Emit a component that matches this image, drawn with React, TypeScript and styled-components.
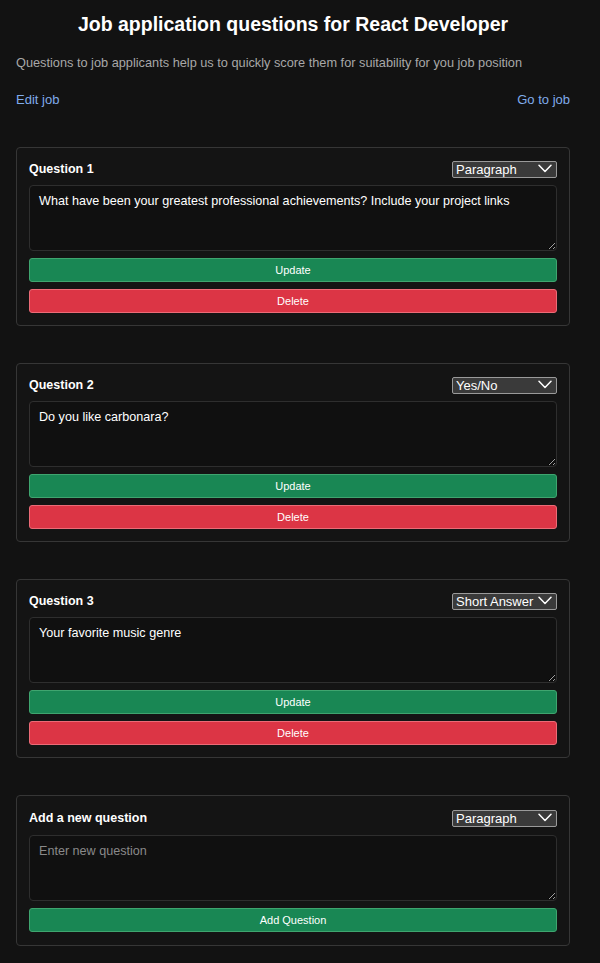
import React from "react";
import styled, { createGlobalStyle } from "styled-components";

const Global = createGlobalStyle`
  html, body { margin: 0; padding: 0; background: #121212; }
  body { font-family: "Liberation Sans", Arial, sans-serif; color: #fff; }
  * { box-sizing: border-box; }
`;

const Page = styled.div`
  padding: 0 30px 20px 16px;
  display: flex;
  flex-direction: column;
`;

const Title = styled.h1`
  margin: 12px 0 0 0;
  font-size: 19.5px;
  font-weight: 700;
  text-align: center;
  line-height: 24px;
`;

const Subtitle = styled.p`
  margin: 19px 0 0 0;
  font-size: 12.75px;
  line-height: 16px;
  color: #a8a8a8;
`;

const LinkRow = styled.div`
  display: flex;
  justify-content: space-between;
  margin-top: 21px;
  margin-bottom: 39px;
`;

const Link = styled.a`
  color: #80aceb;
  font-size: 13px;
  line-height: 16px;
  text-decoration: none;
`;

const List = styled.div`
  display: flex;
  flex-direction: column;
  gap: 37px;
`;

const Card = styled.div<{ $loose?: boolean }>`
  border: 1px solid #363636;
  border-radius: 4px;
  background: #141414;
  padding: ${(p) => (p.$loose ? "13px 12px 13px 12px" : "12px")};
  display: flex;
  flex-direction: column;
`;

const Header = styled.div<{ $loose?: boolean }>`
  display: flex;
  justify-content: space-between;
  align-items: center;
  height: 17px;
  margin-bottom: ${(p) => (p.$loose ? "9px" : "8px")};
`;

const Label = styled.span`
  font-size: 12.5px;
  font-weight: 700;
  line-height: 16px;
  padding-top: 1px;
`;

const SelectWrap = styled.div`
  position: relative;
  width: 105px;
  height: 17px;
`;

const Select = styled.select`
  appearance: none;
  -webkit-appearance: none;
  width: 100%;
  height: 100%;
  background: #3a3a3a;
  color: #fff;
  border: 1px solid #9a9a9a;
  border-radius: 2px;
  font-family: "Liberation Sans", Arial, sans-serif;
  font-size: 13px;
  line-height: 15px;
  padding: 0 0 0 3px;
  outline: none;
`;

const Chevron = styled.svg`
  position: absolute;
  right: 5px;
  top: 4px;
  pointer-events: none;
`;

const TextArea = styled.textarea`
  width: 100%;
  height: 66px;
  background: #101010;
  border: 1px solid #2e2e2e;
  border-radius: 4px;
  color: #fff;
  font-family: "Liberation Sans", Arial, sans-serif;
  font-size: 12.6px;
  line-height: 16px;
  padding: 7px 9px;
  resize: vertical;
  outline: none;
  display: block;
  &::placeholder { color: #8a8a8a; }
`;

const Button = styled.button<{ $variant: "green" | "red" }>`
  width: 100%;
  height: 24px;
  margin-top: 7px;
  border-radius: 3px;
  border: 1px solid ${(p) => (p.$variant === "green" ? "#3fa56f" : "#ec6b77")};
  background: ${(p) => (p.$variant === "green" ? "#198754" : "#dc3545")};
  color: #fff;
  font-family: "Liberation Sans", Arial, sans-serif;
  font-size: 11px;
  cursor: pointer;
`;

const types = ["Paragraph", "Yes/No", "Short Answer"];

const ChevronIcon = () => (
  <Chevron width="14" height="9" viewBox="0 0 14 9" fill="none">
    <path d="M1 1.2 L7 7.5 L13 1.2" stroke="#fff" strokeWidth="1.5" strokeLinecap="round" strokeLinejoin="round" />
  </Chevron>
);

const TypeSelect = ({ value }: { value: string }) => (
  <SelectWrap>
    <Select defaultValue={value}>
      {types.map((t) => (
        <option key={t} value={t}>{t}</option>
      ))}
    </Select>
    <ChevronIcon />
  </SelectWrap>
);

const questions = [
  { id: 1, type: "Paragraph", text: "What have been your greatest professional achievements? Include your project links" },
  { id: 2, type: "Yes/No", text: "Do you like carbonara?" },
  { id: 3, type: "Short Answer", text: "Your favorite music genre" },
];

export default function App() {
  return (
    <>
      <Global />
      <Page>
        <Title>Job application questions for React Developer</Title>
        <Subtitle>Questions to job applicants help us to quickly score them for suitability for you job position</Subtitle>
        <LinkRow>
          <Link href="#">Edit job</Link>
          <Link href="#">Go to job</Link>
        </LinkRow>
        <List>
          {questions.map((q) => (
            <Card key={q.id}>
              <Header>
                <Label>Question {q.id}</Label>
                <TypeSelect value={q.type} />
              </Header>
              <TextArea defaultValue={q.text} />
              <Button $variant="green">Update</Button>
              <Button $variant="red">Delete</Button>
            </Card>
          ))}
          <Card $loose>
            <Header $loose>
              <Label>Add a new question</Label>
              <TypeSelect value="Paragraph" />
            </Header>
            <TextArea placeholder="Enter new question" />
            <Button $variant="green">Add Question</Button>
          </Card>
        </List>
      </Page>
    </>
  );
}
